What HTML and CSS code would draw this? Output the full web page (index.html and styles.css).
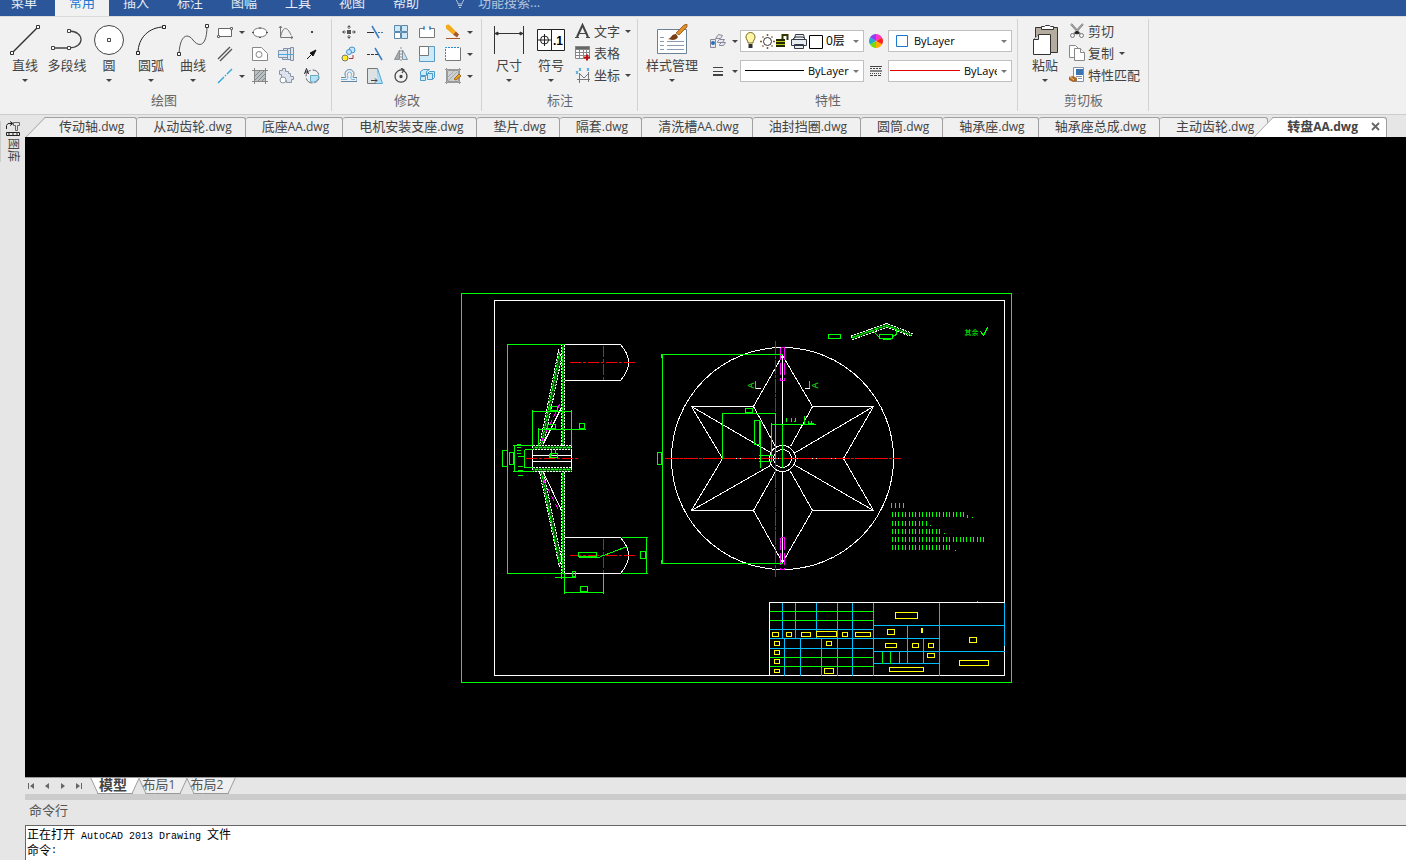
FILE: index.html
```html
<!DOCTYPE html>
<html lang="zh-CN">
    <head>
        <meta charset="UTF-8" />
        <meta name="viewport" content="width=device-width, initial-scale=1.0" />
        <title>转盘AA.dwg</title>
        <link rel="stylesheet" href="styles.css">
    </head>
    <body>
        <!-- 菜单 -->
        <header class="menubar">
            <button class="menu-first">菜单</button>
            <button class="active">常用</button>
            <button>插入</button>
            <button>标注</button>
            <button>图幅</button>
            <button>工具</button>
            <button>视图</button>
            <button>帮助</button>
            <label class="search">
                <svg width="16" height="16" viewBox="0 0 16 16" fill="none" stroke="#b4c3dc"><path d="M6 10C6 7 3.500 7 3.500 3.500a4.500 4.500 0 0 1 9 0C12.500 7 10 7 10 10zM6 11.500h4M7 13.500h2" /></svg>
                <input type="text" placeholder="功能搜索..." />
            </label>
        </header>

        <!-- 功能区 -->
        <div class="ribbon">
            <section class="group g-draw">
                <div class="group-body">
                    <button class="big">
                        <svg width="32" height="32" viewBox="0 0 32 32" fill="#fff" stroke="#333"><path d="M3 29L29 3" stroke-width="1.500" /><path d="M1.500 27.500h3v3h-3zM27.500 1.500h3v3h-3z" /></svg>
                        <span>直线</span><i class="caret"></i>
                    </button>
                    <button class="big">
                        <svg width="32" height="32" viewBox="0 0 32 32" fill="none" stroke="#444"><path d="M2 24H18C34 24 34 7 18 7" stroke-width="1.300" /><path d="M.5 22.500h3v3h-3zM16.500 22.500h3v3h-3zM16.500 5.500h3v3h-3z" fill="#fff" /></svg>
                        <span>多段线</span>
                    </button>
                    <button class="big">
                        <svg width="32" height="32" viewBox="0 0 32 32" fill="#fff" stroke="#444"><circle cx="16" cy="16" r="14.500" /><path d="M14.500 14.500h3v3h-3z" /></svg>
                        <span>圆</span><i class="caret"></i>
                    </button>
                    <button class="big">
                        <svg width="32" height="32" viewBox="0 0 32 32" fill="none" stroke="#222"><path d="M3 29C3 14 14 3 29 3" /><path d="M1.500 27.500h3v3h-3zM27.500 1.500h3v3h-3z" fill="#fff" /></svg>
                        <span>圆弧</span><i class="caret"></i>
                    </button>
                    <button class="big">
                        <svg width="32" height="32" viewBox="0 0 32 32" fill="none" stroke="#555"><path d="M2 30C3 10 11 9 16 16S30 24 30 2" /><path d="M.5 28.500h3v3h-3zM28.500.5h3v3h-3z" fill="#fff" stroke="#333" /></svg>
                        <span>曲线</span><i class="caret"></i>
                    </button>
                    <div class="tools">
                        <button title="矩形"><svg width="16" height="16" viewBox="0 0 16 16" fill="#fff" stroke="#666"><path d="M1.500 4.500h13v8h-13z" /><path d="M.5 11.500h2v2h-2zM13.500 3.500h2v2h-2z" /></svg><i class="caret"></i></button>
                        <button title="椭圆"><svg width="16" height="16" viewBox="0 0 16 16" fill="#fff" stroke="#777"><ellipse cx="8" cy="8.500" rx="7" ry="4.500" /><path d="M7 3.500h2v1H7zM0 8h2v1H0zM14 8h2v1h-2zM7 13h2v1H7z" fill="#555" stroke="none" /></svg></button>
                        <button title="公式曲线"><svg width="16" height="16" viewBox="0 0 16 16" fill="none" stroke="#777"><path d="M2.500 2v11.500H15M1 4l1.500-2L4 4M13 12l2 1.500-2 1.500M2.500 13C5 2 9 2 13 11" /></svg></button>
                        <button title="点"><svg width="16" height="16" viewBox="0 0 16 16"><path d="M7 7h2v2H7z" fill="#444" /></svg></button>
                        <button title="平行线"><svg width="16" height="16" viewBox="0 0 16 16" stroke="#555" stroke-width="1.400"><path d="M1 13L13 1M3 15L15 3" /></svg></button>
                        <button title="多边形"><svg width="16" height="16" viewBox="0 0 16 16" fill="#fff" stroke="#888"><path d="M.5 1.500h9l6 6v7H.5z" /><circle cx="7" cy="8.500" r="3" /></svg></button>
                        <button title="轴"><svg width="16" height="16" viewBox="0 0 16 16" fill="#dce6f2" stroke="#8090a5"><path d="M.5 4.500h9v7h-9zM9.500 2.500h3v11h-3zM12.500 1.500h3v13h-3z" /><path d="M5.500 2.500h4v2h-4zM4.500 11.500h5v2h-5z" /><path d="M0 8.500h16" stroke="#4aa8e0" /></svg></button>
                        <button title="箭头"><svg width="16" height="16" viewBox="0 0 16 16" fill="#111" stroke="#111"><path d="M3 13L9 7" /><path d="M12 4L6 7l3 3z" /></svg></button>
                        <button title="中心线"><svg width="16" height="16" viewBox="0 0 16 16" stroke="#2aa5e0" stroke-width="1.400"><path d="M1 15L7 9M8 8l1-1M10 6L15 1" /></svg><i class="caret"></i></button>
                        <button title="剖面线"><svg width="16" height="16" viewBox="0 0 16 16" stroke="#888"><path d="M2.500 2.500h11v11h-11z" fill="#b9c0c4" /><path d="M0 2.500h16M0 13.500h16M2.500 0v16M13.500 0v16M3 8l5-5M3 12l9-9M6 13l7-7M10 13l3-3" /></svg></button>
                        <button title="零件"><svg width="16" height="16" viewBox="0 0 16 16" fill="#dde3ee" stroke="#8a94a5"><path d="M3.500 8V6.500h-2v-4h3v-2h3v3h3v2h2v3h3v3h-2v3h-5v-2h-4z" /><circle cx="5" cy="12" r="3" fill="#fff" /></svg></button>
                        <button title="局部放大"><svg width="16" height="16" viewBox="0 0 16 16" fill="none" stroke="#667"><circle cx="8.500" cy="8.500" r="6.500" stroke-dasharray="8 2" /><path d="M6.500 7.500h8a5.500 5.500 0 0 1-8 6z" fill="#b5e0fa" stroke="#6ab" /><path d="M.5 6L2.500.5 4.500 6M1 4h3" stroke="#222" /></svg></button>
                    </div>
                </div>
                <h2>绘图</h2>
            </section>

            <section class="group g-modify">
                <div class="group-body">
                    <div class="tools">
                        <button title="平移"><svg width="16" height="16" viewBox="0 0 16 16" fill="#555"><path d="M6 6h4v4H6zM7.500 4h1v1h-1zM7.500 11h1v1h-1zM4 7.500h1v1H4zM11 7.500h1v1h-1zM8 1l2 2.500H6zM8 15l2-2.500H6zM1 8l2.500-2v4zM15 8l-2.500-2v4z" /></svg></button>
                        <button title="裁剪"><svg width="16" height="16" viewBox="0 0 16 16" stroke="#3a7cc0"><path d="M5 2l7 12" stroke-width="1.500" /><path d="M0 8.500h7" stroke="#333" /><path d="M8 8.500h8" stroke-dasharray="2 1" /></svg></button>
                        <button title="阵列"><svg width="16" height="16" viewBox="0 0 16 16" fill="#cdeafa" stroke="#5d87a8"><path d="M1.500 1.500h6v6h-6zM8.500 1.500h6v6h-6zM8.500 8.500h6v6h-6z" /><path d="M1.500 8.500h6v6h-6z" fill="#fff" /></svg></button>
                        <button title="打断"><svg width="16" height="16" viewBox="0 0 16 16" fill="#fff" stroke="#777"><path d="M5 4.500H.5v9h15v-9H11" /><path d="M5 2v4M11 2v4M4 4h2M10 4h2" stroke="#1a80d0" /></svg></button>
                        <button title="删除"><svg width="16" height="16" viewBox="0 0 16 16"><path d="M1 1l3-0.500 7 7-3 3-7-6z" fill="#f3ad1c" /><path d="M8 10.500L11 7.500l3 3-2 3z" fill="#a8552a" /><path d="M1 14.500h14" stroke="#a8552a" /></svg><i class="caret"></i></button>
                        <button title="平移复制"><svg width="16" height="16" viewBox="0 0 16 16" stroke="#4494cc"><circle cx="11" cy="4" r="3" fill="#c5e6fa" /><circle cx="8" cy="6" r="2.500" fill="#c5e6fa" /><circle cx="4" cy="12" r="3" fill="#fe2" stroke="#777" /><path d="M8 12.500h4V9" fill="none" stroke="#a33" /></svg></button>
                        <button title="延伸"><svg width="16" height="16" viewBox="0 0 16 16" stroke="#3a7cc0"><path d="M8 2l7 12" stroke-width="1.500" /><path d="M0 8.500h11" stroke="#333" stroke-dasharray="3 1" /></svg></button>
                        <button title="镜像"><svg width="16" height="16" viewBox="0 0 16 16" stroke="#88939c"><path d="M6.500 4v9.500h-5z" fill="#aaa" /><path d="M9.500 4v9.500h5z" fill="#c5e6fa" /><path d="M8 1v14" stroke-dasharray="2 1" /></svg></button>
                        <button title="缩放"><svg width="16" height="16" viewBox="0 0 16 16" stroke="#5a9cc5"><path d="M.5.5h15v15H.5z" fill="#cdeafa" /><path d="M.5.5h9v9h-9z" fill="#fff" stroke="#777" /></svg></button>
                        <button title="拉伸"><svg width="16" height="16" viewBox="0 0 16 16" fill="none"><path d="M1 2h14v12H1z" fill="#fff" /><path d="M.5 14.500h15v-13" stroke="#777" /><path d="M.5 14V1.500H15" stroke="#2a8cd0" stroke-dasharray="2 1" /></svg><i class="caret"></i></button>
                        <button title="等距线"><svg width="16" height="16" viewBox="0 0 16 16" fill="none" stroke="#5f87a5"><path d="M0 13.500h16v-4h-3.500C11 9.500 13 8 13 6A4.500 4.500 0 0 0 4 6c0 2 1.500 3.500.5 3.500H0" /><path d="M0 11.500h6C8 10 6 8 6.500 6a2 2 0 0 1 4 0c0 2-1.500 4 0 5.500H14" stroke="#78b4dc" /></svg></button>
                        <button title="倒角"><svg width="16" height="16" viewBox="0 0 16 16"><path d="M.5.5h10v15H.5z" fill="#dde2e5" stroke="#777" /><path d="M10.500.5l5 15h-6" fill="#ade0fa" stroke="#56a7d0" /><path d="M4 12.500h6M8 10.500l2 2-2 2" fill="none" stroke="#444" /></svg></button>
                        <button title="旋转"><svg width="16" height="16" viewBox="0 0 16 16" fill="none" stroke="#444" stroke-width="1.300"><path d="M5 3a6 6 0 1 0 6 0" /><path d="M5 3a6 6 0 0 1 5-1M8 0l3 2-2 3" /><circle cx="8" cy="8.500" r="1" fill="#333" /></svg></button>
                        <button title="分解"><svg width="16" height="16" viewBox="0 0 16 16" fill="#cdeafa" stroke="#4b9cca"><path d="M1.500 3.500l3-2h6l-3 2v4h-6zM8.500 5.500l2-2h5v6l-2 2h-5zM1.500 8.500h5v4h-5zM8.500 5.500h5v6" /></svg></button>
                        <button title="编辑"><svg width="16" height="16" viewBox="0 0 16 16" stroke="#999"><path d="M2.500 2.500h11v11h-11z" fill="#cdd0d2" /><path d="M0 1.500h16M0 14.500h16M1.500 0v16M14.500 0v16" /><path d="M3 9l6-6M3 13l9-9" stroke="#aaa" /><path d="M9 11l5-5 2 2-5 4z" fill="#e9a126" stroke="#a66715" /></svg><i class="caret"></i></button>
                    </div>
                </div>
                <h2>修改</h2>
            </section>

            <section class="group g-mark">
                <div class="group-body">
                    <button class="big">
                        <svg width="32" height="32" viewBox="0 0 32 32" stroke="#333" fill="#333"><path d="M1.500 2v28M30.500 2v28M2 9.500h28" /><path d="M2 9.500l3-1.500v3zM30 9.500l-3-1.500v3z" /></svg>
                        <span>尺寸</span><i class="caret"></i>
                    </button>
                    <button class="big">
                        <svg width="32" height="32" viewBox="0 0 32 32" fill="none" stroke="#222"><path d="M2.500 5.500h27v21h-27z" fill="#fff" /><path d="M16.500 5.500v21M3 16h13M9.500 10v12" /><circle cx="9.500" cy="16" r="4" /><text x="18" y="21" class="tol">.1</text></svg>
                        <span>符号</span><i class="caret"></i>
                    </button>
                    <div class="list">
                        <button><svg width="16" height="16" viewBox="0 0 16 16" fill="none" stroke="#444"><path d="M2 14L7.500 2 13 14" stroke-width="2" /><path d="M4 10.500h8M0 14.500h4M11 14.500h4" /></svg>文字<i class="caret"></i></button>
                        <button><svg width="16" height="16" viewBox="0 0 16 16" stroke="#888"><path d="M.5 1.500h14v12H.5z" fill="#fff" /><path d="M.5 1.500h14v3H.5z" fill="#666" /><path d="M0 7.500h15M0 10.500h15M4.500 4v10M8.500 4v10M11.500 4v10" /><path d="M9 12.500h6M12 9.500v6" stroke="#c01010" stroke-width="2" /></svg>表格</button>
                        <button><svg width="16" height="16" viewBox="0 0 16 16" fill="none" stroke="#777"><path d="M4.500 6v10M2 12.500h13M5 7l4 4 4-4M13.500 5v10" /><path d="M1 4l2 3M3 4L1 7M4 1l2 3M6 1L4 4M12 1l2 3M14 1l-2 3" stroke="#45a0d8" /></svg>坐标<i class="caret"></i></button>
                    </div>
                </div>
                <h2>标注</h2>
            </section>

            <section class="group g-prop">
                <div class="group-body">
                    <button class="big wide">
                        <svg width="32" height="32" viewBox="0 0 32 32"><path d="M1.500 5.500h29v24h-29z" fill="#fff" stroke="#6a8294" /><path d="M4 13.500h4M4 17.500h4M4 21.500h4M4 25.500h4M11 17.500h17M11 21.500h17M11 25.500h17" stroke="#8a9db0" /><path d="M12 15c4-1 3-5 8-5l2 3c-2 4-7 3-10 2z" fill="#7a3f16" /><path d="M20 9l8-8 3-1v3l-8 8z" fill="#e48b22" stroke="#7a4a1c" stroke-width=".7" /></svg>
                        <span>样式管理</span><i class="caret"></i>
                    </button>
                    <div class="props">
                        <button title="图层"><svg width="16" height="16" viewBox="0 0 16 16" stroke="#889" fill="#e6eaf0"><path d="M9.500 11.500l2-2h4l-2 3h-4zM7.500 8.500l2-2h5l-2 3h-5zM5.500 5.500l3-4 4 1-2 3z" /><path d="M.5 6.500h5v8h-5z" /><circle cx="3" cy="10" r="2" fill="#2872b8" stroke="none" /></svg><i class="caret"></i></button>
                        <div class="combo layer">
                            <select aria-label="图层"><option>0层</option></select>
                            <svg width="80" height="18" viewBox="0 0 80 18">
                                <path d="M3 11C3 8 1 8 1 5a4.500 4.500 0 0 1 9 0c0 3-2 3-2 6z" fill="#fff6a8" stroke="#7a6a20" /><path d="M3.500 12h4v4h-4z" fill="#333" />
                                <circle cx="22.500" cy="9.500" r="4" fill="#fff" stroke="#333" /><path d="M22.500 2v2M22.500 15v2M15 9.500h2M28 9.500h2M17.500 4.500l1 1M27.500 4.500l-1 1M17.500 14.500l1-1M27.500 14.500l-1-1" stroke="#853" stroke-width="1.500" />
                                <path d="M31 7h9v8h-9z" fill="#222800" /><path d="M31 9.500h9M31 12.500h9" stroke="#b8c820" /><path d="M37.500 7V3h5v5" fill="none" stroke="#333800" stroke-width="2" />
                                <path d="M49.500 6.500l1-4h8l1 4M46.500 7.500h15v6h-15zM49.500 12.500h9v4h-9z" fill="#e8edf2" stroke="#333b46" /><path d="M48 7l2-2h8l2 2" fill="none" stroke="#333" />
                                <path d="M64.500 3.500h13v13h-13z" fill="#fff" stroke="#000" />
                            </svg>
                            <i class="caret"></i>
                        </div>
                        <svg class="mid" width="16" height="16" viewBox="0 0 16 16"><path d="M8 8V1a7 7 0 0 1 6 3.500z" fill="#f3c" /><path d="M8 8l6-3.500a7 7 0 0 1 0 7z" fill="#f22" /><path d="M8 8l6 3.500A7 7 0 0 1 8 15z" fill="#fa0" /><path d="M8 8v7a7 7 0 0 1-6-3.500z" fill="#7d0" /><path d="M8 8l-6 3.500a7 7 0 0 1 0-7z" fill="#2ac" /><path d="M8 8L2 4.500A7 7 0 0 1 8 1z" fill="#84e" /></svg>
                        <div class="combo color">
                            <select aria-label="颜色"><option>ByLayer</option></select>
                            <svg width="12" height="12" viewBox="0 0 12 12"><path d="M.5.5h11v11H.5z" fill="#fff" stroke="#1a78d0" /></svg>
                            <i class="caret"></i>
                        </div>
                        <button title="线宽"><svg width="16" height="16" viewBox="0 0 16 16" stroke="#444"><path d="M3 4.500h10M3 8.500h10" /><path d="M3 12h10" stroke-width="2" /></svg><i class="caret"></i></button>
                        <div class="combo ltype">
                            <select aria-label="线型"><option>ByLayer</option></select>
                            <span class="rule"></span>
                            <i class="caret"></i>
                        </div>
                        <svg class="mid" width="16" height="16" viewBox="0 0 16 16" stroke="#444"><path d="M2 3.500h12" /><path d="M2 5.500h12" stroke-dasharray="2 1" /><path d="M2 8h12" stroke-width="2" stroke="#888" /><path d="M2 10.500h12" stroke-dasharray="1 1" /><path d="M2 12.500h12" stroke-dasharray="3 1" /></svg>
                        <div class="combo lwidth">
                            <select aria-label="线条颜色"><option>ByLayer</option></select>
                            <span class="rule"></span>
                            <i class="caret"></i>
                        </div>
                    </div>
                </div>
                <h2>特性</h2>
            </section>

            <section class="group g-clip">
                <div class="group-body">
                    <button class="big">
                        <svg width="32" height="32" viewBox="0 0 32 32" stroke="#333"><path d="M6.500 3.500h22v25h-22z" fill="#b5aca0" /><path d="M12.500 5.500v-3h3l1-1h4l1 1h3v3z" fill="#fff" /><path d="M9.500 10.500h12v20h-17v-15z" fill="#fff" /><path d="M9.500 10.500v5h-5" fill="#ddd" /></svg>
                        <span>粘贴</span><i class="caret"></i>
                    </button>
                    <div class="list">
                        <button><svg width="16" height="16" viewBox="0 0 16 16" fill="none" stroke="#777"><path d="M2 1l9 10M14 1L5 11" stroke-width="2" /><path d="M2 1l8 9M14 1L6 10" stroke="#ddd" stroke-width=".6" /><circle cx="3.500" cy="12.500" r="2" /><circle cx="12.500" cy="12.500" r="2" /><path d="M6 10l2-2 2 2-2 1z" fill="#222" stroke="#222" /></svg>剪切</button>
                        <button><svg width="16" height="16" viewBox="0 0 16 16" fill="#fff" stroke="#888"><path d="M.5.5h6l3 3v9h-9z" /><path d="M5.500 3.500h6l4 4v8h-10z" /><path d="M11.500 3.500v4h4" /></svg>复制<i class="caret"></i></button>
                        <button><svg width="16" height="16" viewBox="0 0 16 16"><path d="M4.500.5h10v14h-10z" fill="#fff" stroke="#8090a0" /><path d="M7 2h7v6H7z" fill="#3b72b0" /><path d="M7 9.500h6M9 11.500h4" stroke="#8090a0" /><path d="M0 10l4-1 4 2v3l-4 1-4-2z" fill="#b06a28" /><path d="M0 9l5 4" stroke="#f4c58a" /></svg>特性匹配</button>
                    </div>
                </div>
                <h2>剪切板</h2>
            </section>
        </div>

        <div class="workspace">
            <!-- 图库 -->
            <aside class="side">
                <button>
                    <svg width="16" height="16" viewBox="0 0 16 16" fill="none" stroke="#222"><path d="M1.500 8V4.500L3 2.500h4M5 .5l3 2-3 2" /><path d="M8.500 1.500h6v3h-2v5h-2v-5h-2z" stroke="#666" /><path d="M1.500 11.500h13v3h-13zM3 13h2M7 13h2M11 13h2" /></svg>
                    <span>图库</span>
                </button>
            </aside>
            <main class="main">
                <nav class="doc-tabs">
                    <button class="first">传动轴<span class="latin">.dwg</span></button>
                    <button>从动齿轮<span class="latin">.dwg</span></button>
                    <button>底座<span class="latin">AA.dwg</span></button>
                    <button>电机安装支座<span class="latin">.dwg</span></button>
                    <button>垫片<span class="latin">.dwg</span></button>
                    <button>隔套<span class="latin">.dwg</span></button>
                    <button>清洗槽<span class="latin">AA.dwg</span></button>
                    <button>油封挡圈<span class="latin">.dwg</span></button>
                    <button>圆筒<span class="latin">.dwg</span></button>
                    <button>轴承座<span class="latin">.dwg</span></button>
                    <button>轴承座总成<span class="latin">.dwg</span></button>
                    <button>主动齿轮<span class="latin">.dwg</span></button>
                    <button class="current">转盘<span class="latin">AA.dwg</span><svg width="9" height="9" viewBox="0 0 9 9" stroke="#666" stroke-width="1.800"><path d="M1 1l7 7M8 1L1 8" /></svg></button>
                </nav>

                <!-- 绘图区 -->
                <div class="canvas">
                    <svg class="drawing" viewBox="25 137 1381 640">
                        <defs>
                            <pattern id="hatch" width="3" height="3" patternUnits="userSpaceOnUse">
                                <path d="M0 2h1v1H0zM1 1h1v1H1zM2 0h1v1H2z" fill="#0f0" />
                            </pattern>
                        </defs>
                        <g transform="translate(.5 .5)">
                            <!-- 图框 -->
                            <path class="g" d="M461 293H1011V682H461z" />
                            <path class="w" d="M494 300H1004V675H494z" />

                            <!-- 侧视图 -->
                            <g class="hatched">
                                <path d="M561 344h3v101h-3zM561 471h3v102h-3z" />
                                <path d="M558 350L539 445H543L561 358zM539 471L559 567 561 558 543 471z" />
                                <path d="M532 445h39v4h-39zM532 467h39v4h-39z" />
                            </g>
                            <path class="g" stroke-dasharray="3 1" d="M559 352L541 444M541 472L559 564M562 346V444M562 472V572M534 447H570M534 469H570" />
                            <path class="w" d="M564 344H620Q636 362 620 380H564M564 537H620Q636 555 620 573H564" />
                            <path class="w" d="M532 449V467M571 449V467M532 455H571M532 461H571M543 443L561 407M543 472L561 510" />
                            <path class="m" stroke-dasharray="6 3" d="M541 441L559 404M543 479L559 512" />
                            <path class="r" stroke-dasharray="11 2 3 2" d="M569 362H636M603 345V379M569 555H636M603 538V573M525 458H578" />
                            <path class="g" d="M506 344H564M507 344V573M506 573H564M621 573H647M621 537H647M646 537V573" />
                            <path class="g" d="M532 409V445M571 409V445M532 411H571M538 427V445M538 429H585" />
                            <path class="g" d="M512 445H532M512 471H532M514 445V471M524 449H532M524 467H532M524 449V467" />
                            <path class="g" d="M516 444H520M516 447H520M516 450H520M516 453H520M517 456H524M517 466H522M517 470H522M517 475H522" />
                            <path class="g" d="M550 406h7v4h-7zM547 424h8v4h-8zM579 423h5v5h-5zM502 450h5v16h-5zM509 452h4v12h-4zM550 453h7v4h-7zM640 551h5v7h-5zM578 552h18v4h-18zM580 586h7v5h-7zM572 571h3v5h-3z" />
                            <path class="g" d="M549 457V454H551V449M555 449V453M578 557H598L624 547H627M564 573V593M603 573V593M564 592H603M554 577H575M561 573V578" />

                            <!-- 主视图 -->
                            <circle class="w" cx="782" cy="458" r="111" />
                            <circle class="w" cx="782" cy="458" r="13" />
                            <circle class="w" cx="782" cy="458" r="9" />
                            <path class="w" d="M782 355L812 406H873L843 458 873 510H812L782 562 753 510H691L722 458 691 406H753z" />
                            <path class="w" d="M691 406L770 452M873 406L795 452M691 510L770 465M873 510L795 465M753 406L775 446M812 406L790 446M753 510L775 471M812 510L790 471M782 355V445M782 471V562" />
                            <path class="w" d="M722 458H843" />
                            <path class="r" stroke-dasharray="14 1 3 1" d="M664 458H900M775 340V576" />
                            <path class="m" stroke-dasharray="12 3" d="M780 347V380M784 347V380M780 537V569M784 537V569" />
                            <path class="m" d="M780 347h4M780 380h4M780 537h4M780 569h4" />
                            <path class="g" d="M660 354H782M662 354V563M660 563H782M661 354v3M661 563v-4M657 452h4v12h-4z" />
                            <path class="g" d="M722 412V458M775 412V458M722 413H775M745 408h7v4h-7zM754 420h5v24h-5zM760 420V467" />
                            <path class="g" d="M758 455H772M758 461H771M771 422V460M771 424H815M782 424V467" />
                            <path class="g" d="M786 417v4M791 417v4M795 417v4h-2M804 415v9M808 420v3h2M811 420v3h2" />
                            <path class="g" d="M755 380v8M809 380v8" />
                            <path class="w" d="M755 388h5M804 388h5" />
                            <text class="mark" transform="translate(753 388) rotate(-90)">A</text>
                            <text class="mark" transform="translate(817 388) rotate(-90)">A</text>

                            <!-- 剖视图 -->
                            <path class="hatched" d="M851 335L886 323 912 333 911 336 886 327 852 339z" />
                            <path class="g" stroke-dasharray="3 1" d="M852 337L886 325 911 335" />
                            <path class="g" d="M828 334h12v4h-12zM879 334h13v4h-13zM873 331L880 338M882 339H890M892 336L896 334V329" />
                            <text class="rest" x="964" y="334">其余</text>
                            <path class="g" d="M980 331L983 335 987 327" />

                            <!-- 技术要求 -->
                            <g class="notes" transform="translate(-.5 -.5)">
                                <path d="M891 505.500H905" stroke-dasharray="1 3" />
                                <path d="M892 514.500H964M892 539.500H985" />
                                <path d="M892 523.500H928M892 531.500H943M892 547.500H952" />
                            </g>
                            <path class="g" d="M967 514v3M972 516v1M929 525h1M943 533h1M954 550h1" />

                            <!-- 标题栏 -->
                            <path class="b" d="M782 602V638M795 602V638M816 602V638M837 602V638M852 602V638M784 638V675M800 638V675M821 638V675M837 638V675M852 638V675" />
                            <path class="b" d="M769 629H873M769 638H939M769 648H873M873 602V675M939 602V675M873 625H1004M873 651H1004M873 663H939M907 625V663M923 638V663M1004 602V645" />
                            <path class="g" d="M769 611H873M769 620H873M769 657H873M769 666H873M882 651V663M890 651V663M899 651V663M976 601h1" />
                            <path class="w" d="M769 675V602H1004" />
                            <path class="y" d="M772 632h6v4h-6zM786 632h5v4h-5zM801 632h9v4h-9zM816 631h20v5h-20zM842 632h5v4h-5zM855 632h15v4h-15z" />
                            <path class="y" d="M774 641h5v4h-5zM826 641h5v4h-5zM774 650h5v4h-5zM774 659h5v4h-5zM774 669h5v3h-5zM824 668h9v5h-9z" />
                            <path class="y" d="M895 612h22v6h-22zM887 629h7v5h-7zM921 628h1v4h-1zM885 643h11v4h-11zM912 643h6v4h-6zM928 643h5v4h-5zM927 653h7v4h-7z" />
                            <path class="y" d="M969 637h7v5h-7zM959 660h29v5h-29zM889 667h34v4h-34z" />
                        </g>
                    </svg>
                </div>

                <!-- 布局标签 -->
                <div class="layout-bar">
                    <button class="step" title="首页"><svg width="8" height="8" viewBox="0 0 8 8" fill="#666"><path d="M1 1h1v6H1zM7 1v6L3 4z" /></svg></button>
                    <button class="step" title="上一个"><svg width="8" height="8" viewBox="0 0 8 8" fill="#666"><path d="M6 1v6L2 4z" /></svg></button>
                    <button class="step" title="下一个"><svg width="8" height="8" viewBox="0 0 8 8" fill="#666"><path d="M2 1v6l4-3z" /></svg></button>
                    <button class="step" title="末页"><svg width="8" height="8" viewBox="0 0 8 8" fill="#666"><path d="M6 1h1v6H6zM1 1v6l4-3z" /></svg></button>
                    <button class="sheet current">模型</button>
                    <button class="sheet">布局<span class="latin">1</span></button>
                    <button class="sheet">布局<span class="latin">2</span></button>
                </div>
                <div class="splitter"></div>

                <!-- 命令行 -->
                <section class="command">
                    <h2>命令行</h2>
                    <div class="console">
                        <p>正在打开<span class="mono"> AutoCAD 2013 Drawing </span>文件</p>
                        <label>命令<span class="mono">:</span><input type="text" /></label>
                    </div>
                </section>
            </main>
        </div>
    </body>
</html>
```

FILE: styles.css
```css
* {
    margin: 0;
    padding: 0;
    box-sizing: border-box;
}
body {
    display: flex;
    flex-direction: column;
    height: 100vh;
    overflow: hidden;
    background-color: #e6e6e6;
    color: #444;
    font: 13px/20px "Open Sans", "Noto Sans CJK SC", sans-serif;
}
button,
input,
select {
    font: inherit;
    color: inherit;
    border: none;
    background: none;
    outline: none;
    white-space: nowrap;
}
h2 {
    font-size: 13px;
    font-weight: normal;
    color: #666;
}
svg {
    display: block;
    flex-shrink: 0;
}
.latin {
    font-size: 12px;
}
.caret {
    flex-shrink: 0;
    width: 0;
    border: 3px solid transparent;
    border-top-color: #444;
    border-bottom-width: 0;
}

/* 菜单 */
.menubar {
    display: flex;
    align-items: flex-end;
    height: 16px;
    overflow: hidden;
    background-color: #2b579a;
    color: #e8edf5;
}
.menubar button {
    width: 54px;
    height: 28px;
}
.menubar .menu-first {
    width: 55px;
    padding-right: 7px;
}
.menubar .active {
    background-color: #f1f1f1;
    color: #1a78d0;
}
.search {
    display: flex;
    align-items: center;
    gap: 10px;
    height: 28px;
    padding-left: 19px;
}
.search input {
    width: 120px;
}
.search input::placeholder {
    color: #b4c3dc;
}

/* 功能区 */
.ribbon {
    display: flex;
    background-color: #f1f1f1;
    border-top: 1px solid #dadada;
    border-bottom: 1px solid #ccc;
}
.group {
    position: relative;
    padding-bottom: 4px;
}
.group::after {
    content: "";
    position: absolute;
    top: 2px;
    right: 0;
    bottom: 3px;
    width: 1px;
    background-color: #d2d2d2;
}
.group h2 {
    text-align: center;
}
.group-body {
    display: flex;
    align-items: flex-start;
    height: 73px;
    padding-left: 6px;
}
.g-draw {
    width: 332px;
    padding-right: 4px;
}
.g-modify {
    width: 150px;
}
.g-mark {
    width: 156px;
}
.g-prop {
    width: 380px;
}
.g-clip {
    width: 131px;
}
.g-draw .group-body,
.g-modify .group-body {
    padding-left: 4px;
}
.big {
    display: flex;
    flex-direction: column;
    align-items: center;
    width: 42px;
    padding-top: 7px;
    line-height: 18px;
}
.big.wide {
    width: 56px;
}
.big .caret {
    margin-top: 5px;
}
.tol {
    font: bold 12px "Liberation Sans", sans-serif;
    fill: #000;
    stroke: none;
}
.tools {
    display: grid;
    grid-auto-rows: 22px;
    padding-top: 4px;
}
.tools button,
.props button {
    display: flex;
    align-items: center;
    justify-content: center;
    gap: 6px;
}
.g-draw .tools {
    grid-template-columns: 32px 26px 26px 26px;
    padding-left: 1px;
}
.g-draw .tools button:nth-child(4n + 1) {
    justify-content: flex-start;
    padding-left: 2px;
}
.g-modify .tools {
    grid-template-columns: 26px 26px 26px 26px 38px;
}
.list {
    display: flex;
    flex-direction: column;
    padding: 3px 0 0 3px;
}
.list button {
    display: flex;
    align-items: center;
    gap: 3px;
    height: 22px;
}
.list .caret {
    margin-left: 2px;
}
.props {
    display: grid;
    grid-template-columns: 32px 124px 24px 124px;
    grid-auto-rows: 30px;
    align-items: center;
    padding: 9px 0 0 8px;
}
.mid {
    justify-self: center;
}
.combo {
    position: relative;
    height: 22px;
    border: 1px solid #c0c0c0;
    background-color: #fff;
    color: #000;
}
.combo select {
    appearance: none;
    display: block;
    width: 100%;
    height: 20px;
    padding-right: 14px;
    overflow: hidden;
    font-size: 11px;
}
.combo .caret {
    position: absolute;
    top: 9px;
    right: 4px;
    border-top-color: #777;
}
.combo svg {
    position: absolute;
    top: 1px;
    left: 4px;
}
.layer select {
    padding-left: 85px;
    font-size: 12px;
}
.color select {
    padding-left: 25px;
}
.combo.color svg {
    top: 4px;
    left: 7px;
}
.ltype select {
    padding-left: 67px;
}
.lwidth select {
    padding-left: 75px;
}
.rule {
    position: absolute;
    top: 9px;
    left: 4px;
    width: 59px;
    height: 1px;
    background-color: #000;
}
.lwidth .rule {
    left: 1px;
    width: 70px;
    background-color: #e00000;
}

/* 工作区 */
.workspace {
    display: flex;
    flex: 1;
    min-height: 0;
}
.side {
    width: 25px;
    padding-top: 6px;
}
.side button {
    display: flex;
    flex-direction: column;
    align-items: center;
    gap: 1px;
    width: 24px;
    border-left: 1px solid #ccc;
}
.side span {
    font-size: 12px;
    line-height: 16px;
    writing-mode: vertical-rl;
    text-orientation: sideways;
}
.main {
    display: flex;
    flex: 1;
    flex-direction: column;
    min-width: 0;
}
.doc-tabs {
    display: flex;
    height: 22px;
    padding: 2px 0 0 20px;
}
.doc-tabs button {
    position: relative;
    flex-shrink: 0;
    padding: 0 13px 2px 16px;
    line-height: 17px;
    border: 1px solid #a0a0a0;
    border-width: 1px 1px 0 0;
    border-radius: 3px 3px 0 0;
    background-color: #f0f0f0;
}
.doc-tabs .first {
    z-index: 0;
    padding: 0 12px 2px 14px;
    border-radius: 0 3px 0 0;
}
.doc-tabs .current {
    z-index: 1;
    display: flex;
    align-items: center;
    margin-left: 5px;
    padding: 0 6px 2px 14px;
    border-radius: 0 3px 0 0;
    background-color: #fff;
    font-weight: bold;
}
.doc-tabs .current svg {
    margin-left: 13px;
}
/* 斜边 */
.doc-tabs .first::before,
.doc-tabs .current::before {
    content: "";
    position: absolute;
    z-index: -1;
    top: -1px;
    bottom: 0;
    left: 0;
    width: 20px;
    border: 1px solid #a0a0a0;
    border-width: 1px 0 0 1px;
    background-color: inherit;
    transform: skewX(-44deg);
    transform-origin: 0 0;
}
.canvas {
    position: relative;
    z-index: 2;
    flex: 1;
    min-height: 0;
    background-color: #000;
}
.drawing {
    width: 100%;
    height: 100%;
    fill: none;
    shape-rendering: crispEdges;
}
.w { stroke: #fff; }
.g { stroke: #0f0; }
.r { stroke: #f00; }
.m { stroke: #f0f; }
.b { stroke: #00bfff; }
.y { stroke: #ff0; }
.hatched {
    fill: url(#hatch);
    stroke: #fff;
    stroke-dasharray: 2 1;
}
.notes {
    stroke: #0f0;
    stroke-width: 5;
    stroke-dasharray: 1 2 1 2 1 3 1 2 1 3;
}
.mark {
    font: 9px "Liberation Sans", sans-serif;
    fill: #0f0;
}
.rest {
    font: 7px "Noto Sans CJK SC", sans-serif;
    fill: #0f0;
}

/* 布局标签 */
.layout-bar {
    display: flex;
    height: 17px;
    padding-left: 2px;
    border-top: 1px solid #999;
}
.step {
    display: flex;
    align-items: center;
    width: 16px;
}
.sheet {
    position: relative;
    z-index: 0;
    width: 48px;
    height: 16px;
    padding: 0 8px 3px 0;
    line-height: 13px;
    color: #555;
}
.sheet.current {
    z-index: 1;
    padding-right: 4px;
    color: #444;
    font-size: 14px;
    font-weight: bold;
}
.sheet::before,
.sheet::after {
    content: "";
    position: absolute;
    z-index: -1;
    top: 0;
    bottom: 0;
    border: 1px solid #999;
    background-color: #f0f0f0;
}
.sheet::before {
    left: 3px;
    right: 50%;
    border-width: 0 0 1px 1px;
    transform: skewX(25deg);
}
.sheet::after {
    left: 40%;
    right: 3px;
    border-width: 0 1px 1px 0;
    transform: skewX(-25deg);
}
.sheet.current::before,
.sheet.current::after {
    background-color: #fff;
}
.splitter {
    height: 6px;
    background-color: #ccc;
}

/* 命令行 */
.command h2 {
    padding: 0 0 4px 4px;
    line-height: 21px;
    color: #555;
}
.console {
    height: 35px;
    padding: 1px;
    overflow: hidden;
    border: 1px solid #666;
    border-width: 1px 0 0 1px;
    background-color: #fff;
    color: #000;
    font-size: 12px;
    line-height: 16px;
}
.console label {
    display: flex;
}
.console input {
    flex: 1;
    height: 16px;
}
.mono {
    font-family: "Liberation Mono", monospace;
    font-size: 10px;
    white-space: pre;
}
.console p .mono {
    line-height: 10px;
}
```
